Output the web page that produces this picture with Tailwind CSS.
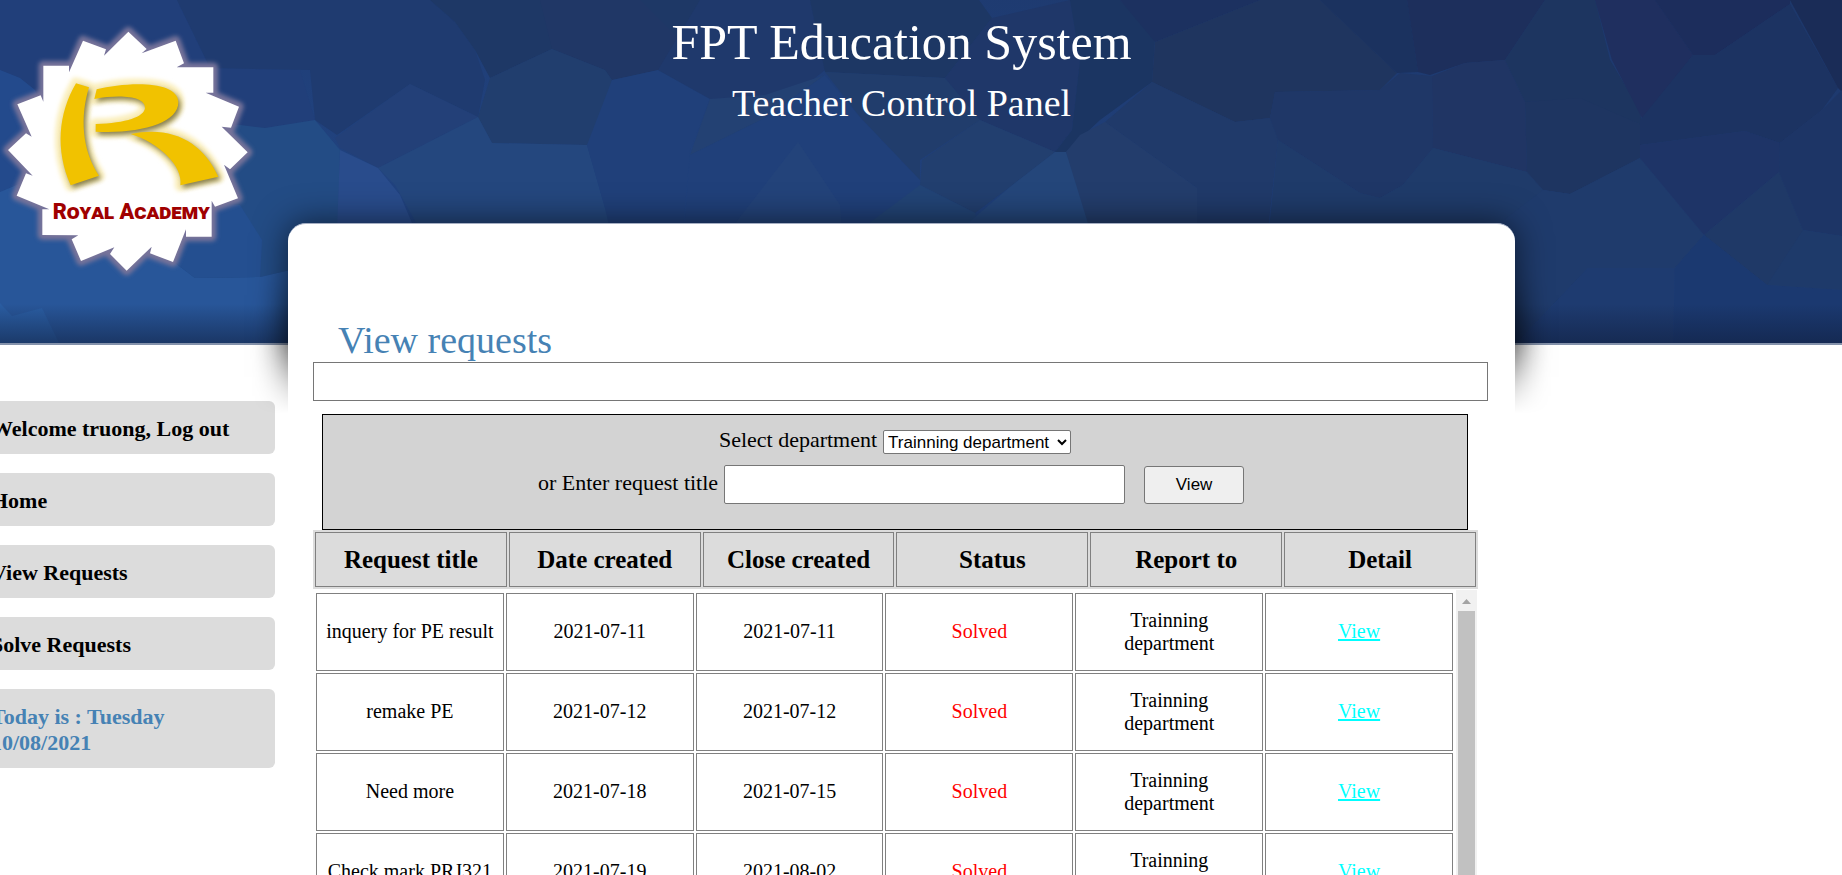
<!DOCTYPE html>
<html lang="en">
<head>
<meta charset="utf-8">
<title>FPT Education System</title>
<script src="https://cdn.jsdelivr.net/npm/@tailwindcss/browser@4"></script>
</head>
<body class="relative h-screen overflow-hidden bg-white font-['Liberation_Serif',serif] text-black">

<!-- Faceted blue banner -->
<svg class="absolute inset-x-0 top-0 h-[345px] w-full" viewBox="0 0 1842 345" preserveAspectRatio="none" aria-hidden="true">
  <defs>
    <linearGradient id="base" x1="0" y1="1" x2="1" y2="0">
      <stop offset="0" stop-color="#285899"/><stop offset=".3" stop-color="#214380"/><stop offset="1" stop-color="#1d376a"/>
    </linearGradient>
    <linearGradient id="foot" x1="0" y1="0" x2="0" y2="1">
      <stop offset="0" stop-color="#0f1c3a" stop-opacity="0"/><stop offset="1" stop-color="#0f1c3a" stop-opacity=".55"/>
    </linearGradient>
  </defs>
  <rect width="1842" height="345" fill="url(#base)"/>
  <path fill="#213f7a" d="M0 0H177L210 68L300 70L315 120L265 128L240 125L120 130L35 90L20 78L0 70Z"/>
  <path fill="#234a8c" d="M0 70L20 78L35 90L60 150L40 175L0 192Z"/>
  <path fill="#285699" d="M0 192L40 175L120 240L165 255L195 278L260 277L290 270L290 345H0Z"/>
  <path fill="#2a5da2" d="M0 303L12 316L42 308L60 345H0Z"/>
  <path fill="#234c85" d="M120 130L240 125L265 128L315 120L340 150L338 223L290 270L260 277L195 278L165 255L100 200Z"/>
  <path fill="#244f90" d="M100 200L240 205L262 240L260 277L195 278L165 255Z"/>
  <path fill="#1f3b70" d="M177 0H430L455 22L475 50L485 80L478 117L410 84L337 135L315 120L310 70L210 68Z"/>
  <path fill="#1e3866" d="M430 0H700L690 75L658 70L612 80L605 70L552 49L490 78L475 50L455 22Z"/>
  <path fill="#203766" d="M540 0H640L700 60L658 70L612 80L605 70L552 49Z"/>
  <path fill="#213e6e" d="M490 78L552 49L605 70L612 80L600 120L587 145L492 143L478 117Z"/>
  <path fill="#234078" d="M410 84L478 117L378 168L340 148L335 138Z"/>
  <path fill="#24477e" d="M478 117L492 143L587 145L605 208L683 218V230H420L395 185L378 168Z"/>
  <path fill="#294c8c" d="M340 150L378 168L400 195L415 230H337Z"/>
  <path fill="#20407a" d="M612 80L658 70L710 99L690 150L683 230H610L605 208L587 145Z"/>
  <path fill="#1f396c" d="M700 0H810L825 70L765 118L710 99L658 70Z"/>
  <path fill="#234173" d="M710 99L765 95L825 75L765 118L690 155Z"/>
  <path fill="#20407a" d="M765 118L825 75L860 117L920 180V186L870 230H684L690 155Z"/>
  <path fill="#23437a" d="M798 142L840 205L842 230H730Z"/>
  <path fill="#1d3764" d="M810 0H979L992 18L945 78L825 72Z"/>
  <path fill="#213d6c" d="M825 72L945 78L980 120L920 160V180L860 117Z"/>
  <path fill="#1f3769" d="M945 78L992 18L1070 0L1080 60L1072 130L1055 152L980 120Z"/>
  <path fill="#223f6f" d="M980 120L1055 152L1010 187L975 213L920 185L922 160Z"/>
  <path fill="#224476" d="M920 185L975 213L980 230H860Z"/>
  <path fill="#24467a" d="M1066 152L1095 230H960L1010 187L1055 152Z"/>
  <path fill="#1b3562" d="M1070 0H1120L1155 38L1152 82L1100 120L1066 152L1055 152L1072 130L1080 60Z"/>
  <path fill="#1c3160" d="M1120 0H1260L1155 42Z"/>
  <path fill="#1f355f" d="M1155 42L1260 0H1320L1397 73L1380 90L1275 92L1270 118L1235 122L1152 82Z"/>
  <path fill="#203a6a" d="M1152 82L1235 122L1270 118L1278 140L1268 230H1197V188L1105 122Z"/>
  <path fill="#233d6c" d="M1105 122L1197 188V230H1090L1066 152L1080 135Z"/>
  <path fill="#1b325f" d="M1320 0H1407L1418 72L1397 73Z"/>
  <path fill="#1d2f5c" d="M1407 0H1545L1505 60L1465 63L1430 75L1418 72Z"/>
  <path fill="#1f3767" d="M1380 90L1400 73L1432 76L1433 148L1403 185L1380 198L1360 193L1278 140L1270 118L1275 92Z"/>
  <path fill="#203564" d="M1432 76L1465 63L1505 60L1525 102L1527 172L1433 148Z"/>
  <path fill="#1f3b6a" d="M1433 148L1527 172L1543 190L1500 240H1268L1278 140L1360 193L1380 198L1403 185Z"/>
  <path fill="#1d3560" d="M1545 0H1595L1610 60L1640 110L1642 125L1580 100L1525 102L1505 60Z"/>
  <path fill="#1e3561" d="M1525 102L1580 98L1642 125L1640 158L1570 194L1543 190L1527 172Z"/>
  <path fill="#1f2f5f" d="M1595 0H1655L1693 55L1643 120L1612 60Z"/>
  <path fill="#1c2d5c" d="M1655 0H1790V4L1715 55H1693Z"/>
  <path fill="#1c3362" d="M1790 4L1715 55L1693 55L1640 120V145L1745 131L1780 143L1822 110L1838 88Z"/>
  <path fill="#1a2c57" d="M1790 0H1842V92L1838 88Z"/>
  <path fill="#1f3b6c" d="M1640 158L1704 235L1675 268H1588L1515 345L1500 223L1543 190L1570 194Z"/>
  <path fill="#1e3b70" d="M1588 268H1675L1673 345H1515Z"/>
  <path fill="#1e3467" d="M1640 145L1745 131L1780 143L1779 172L1704 235L1640 158Z"/>
  <path fill="#1f3967" d="M1779 172L1803 230L1805 285L1767 285L1704 235Z"/>
  <path fill="#1d3566" d="M1822 110L1842 90V236L1803 230L1779 172L1780 143Z"/>
  <path fill="#1b3970" d="M1704 235L1767 285L1842 290V345H1673L1675 268Z"/>
  <path fill="#1e3a6a" d="M1803 230L1842 236V290L1767 285Z"/>
  <rect y="304" width="1842" height="40" fill="url(#foot)"/>
  <rect y="343" width="1842" height="2" fill="#8492ab"/>
</svg>

<div class="relative grid h-full grid-cols-[288px_minmax(0,1fr)_327px]">

  <div>
    <svg class="block h-[290px] w-[260px]" viewBox="0 0 780 870" role="img" aria-label="Royal Academy">
      <defs>
        <filter id="soft" x="-20%" y="-20%" width="140%" height="140%"><feGaussianBlur stdDeviation="6"/></filter>
        <filter id="shade" x="-20%" y="-20%" width="140%" height="140%"><feGaussianBlur stdDeviation="8"/></filter>
        <path id="badge" d="M385 95L440 147L425 160L527 122L552 190L530 202H640V278H617L717 320L693 383L665 380L743 457L690 508L672 494L714 595L645 620L635 602V710H558V688L519 786L450 760L455 740L380 812L330 762L343 742L243 783L215 718L235 706L127 705V628H148L50 587L78 520L98 527L24 450L78 400L95 410L52 313L122 286L130 305V197H207V217L249 122L318 148L312 167Z"/>
        <g id="letter">
          <path d="M228 250L267 262C240 350 245 450 297 527L212 556C165 450 175 340 228 250Z"/>
          <path d="M290 268C380 245 535 240 535 307C535 370 420 402 287 395V372C380 370 432 350 435 325C437 288 360 283 283 297Z"/>
          <path d="M392 402C520 375 610 430 655 530L541 556C550 500 480 430 392 402Z"/>
        </g>
      </defs>
      <use href="#badge" fill="#77739a" stroke="#77739a" stroke-width="28" stroke-linejoin="round" filter="url(#soft)"/>
      <use href="#badge" fill="#fff"/>
      <use href="#letter" fill="#faeebb" stroke="#faeebb" stroke-width="34" stroke-linejoin="round" filter="url(#soft)"/>
      <use href="#letter" fill="#6b6330" opacity=".8" x="7" y="9" filter="url(#shade)"/>
      <use href="#letter" fill="#f1c200"/>
      <text x="158" y="657" fill="#a00000" font-family="Roboto, sans-serif" font-weight="900" font-size="65" style="font-variant:small-caps">Royal Academy</text>
    </svg>

    <nav class="mt-[111px] mr-[13px] -ml-5 flex flex-col gap-[19px] text-[22px]/[26px] font-bold">
      <a href="#" class="rounded-md bg-[#dcdcdc] pt-[15px] pb-3 pl-[11px]">Welcome truong, Log out</a>
      <a href="#" class="rounded-md bg-[#dcdcdc] pt-[15px] pb-3 pl-[11px]">Home</a>
      <a href="#" class="rounded-md bg-[#dcdcdc] pt-[15px] pb-3 pl-[11px]">View Requests</a>
      <a href="#" class="rounded-md bg-[#dcdcdc] pt-[15px] pb-3 pl-[11px]">Solve Requests</a>
      <p class="rounded-md bg-[#dcdcdc] pt-[15px] pb-3 pl-[11px] text-[#4682b4]">Today is : Tuesday<br>10/08/2021</p>
    </nav>
  </div>

  <div class="flex h-full min-h-0 flex-col">
    <header class="h-[223px] pt-[14px] text-center text-white">
      <h1 class="text-[50px]/[56px]">FPT Education System</h1>
      <h2 class="mt-[11px] text-[38px]/[44px]">Teacher Control Panel</h2>
    </header>

    <main class="relative flex min-h-0 flex-1 flex-col rounded-t-[18px]">
      <!-- Card shadow, fading out below the banner -->
      <div class="absolute -inset-x-16 -top-16 h-[260px] overflow-hidden px-16 pt-16 mask-linear-180 mask-linear-from-70% mask-linear-to-98%" aria-hidden="true">
        <div class="relative h-[300px] rounded-t-[18px] shadow-[0_0_34px_rgba(0,0,0,0.6)]">
          <div class="absolute inset-x-2 top-20 h-[68px] shadow-[0_0_36px_8px_rgba(0,0,0,0.55)]"></div>
        </div>
      </div>

      <div class="relative flex min-h-0 flex-1 flex-col rounded-t-[18px] border-t border-[#a5aec2] bg-white pt-[95px] pr-[27px] pl-[25px]">
        <h3 class="pl-[25px] text-[38px]/[43px] text-[#4682b4]">View requests</h3>
        <input type="text" aria-label="Message" class="h-[39px] w-full shrink-0 border border-[#767676] bg-white px-2">

        <form class="mt-[13px] mr-5 ml-[9px] flex flex-col items-center gap-[11px] border border-black bg-[#d3d3d3] pt-[15px] pb-[25px] text-[22px]/[24px]">
          <div class="flex h-6 items-center gap-[6px]">
            <label for="dept" class="pb-1">Select department</label>
            <select id="dept" class="h-6 w-[188px] rounded-[2px] border border-[#767676] bg-white font-['Liberation_Sans',sans-serif] text-[17px]/[20px]">
              <option>Trainning department</option>
            </select>
          </div>
          <div class="flex items-center pr-2">
            <label for="title" class="mr-[6px] pb-1">or Enter request title</label>
            <input id="title" type="text" class="h-[39px] w-[401px] rounded-[2px] border border-[#767676] bg-white px-2">
            <button type="button" class="ml-[19px] h-[38px] w-[100px] rounded-[3px] border border-[#767676] bg-[#efefef] font-['Liberation_Sans',sans-serif] text-[17px]">View</button>
          </div>
        </form>

        <div class="mr-[10px] flex min-h-0 flex-1 flex-col">
          <table class="w-full table-fixed border-separate border-spacing-[2px] bg-[#dcdcdc] text-[25px]/[28px]">
            <tr>
              <th class="h-[55px] border border-[#808080]">Request title</th>
              <th class="border border-[#808080]">Date created</th>
              <th class="border border-[#808080]">Close created</th>
              <th class="border border-[#808080]">Status</th>
              <th class="border border-[#808080]">Report to</th>
              <th class="border border-[#808080]">Detail</th>
            </tr>
          </table>

          <div class="mt-px flex min-h-0 flex-1 overflow-hidden">
            <div class="flex-1 pt-px pr-px pl-px">
              <table class="w-full table-fixed border-separate border-spacing-[2px] text-center text-[20px]/[23px]">
                <tr>
                  <td class="h-[78px] border border-[#808080] px-1 pb-[2px]">inquery for PE result</td>
                  <td class="border border-[#808080] px-1 pb-[2px]">2021-07-11</td>
                  <td class="border border-[#808080] px-1 pb-[2px]">2021-07-11</td>
                  <td class="border border-[#808080] px-1 pb-[2px] text-[#ff0000]">Solved</td>
                  <td class="border border-[#808080] px-1">Trainning<br>department</td>
                  <td class="border border-[#808080] px-1 pb-[2px]"><a href="#" class="text-[#00ffff] underline decoration-2">View</a></td>
                </tr>
                <tr>
                  <td class="h-[78px] border border-[#808080] px-1 pb-[2px]">remake PE</td>
                  <td class="border border-[#808080] px-1 pb-[2px]">2021-07-12</td>
                  <td class="border border-[#808080] px-1 pb-[2px]">2021-07-12</td>
                  <td class="border border-[#808080] px-1 pb-[2px] text-[#ff0000]">Solved</td>
                  <td class="border border-[#808080] px-1">Trainning<br>department</td>
                  <td class="border border-[#808080] px-1 pb-[2px]"><a href="#" class="text-[#00ffff] underline decoration-2">View</a></td>
                </tr>
                <tr>
                  <td class="h-[78px] border border-[#808080] px-1 pb-[2px]">Need more</td>
                  <td class="border border-[#808080] px-1 pb-[2px]">2021-07-18</td>
                  <td class="border border-[#808080] px-1 pb-[2px]">2021-07-15</td>
                  <td class="border border-[#808080] px-1 pb-[2px] text-[#ff0000]">Solved</td>
                  <td class="border border-[#808080] px-1">Trainning<br>department</td>
                  <td class="border border-[#808080] px-1 pb-[2px]"><a href="#" class="text-[#00ffff] underline decoration-2">View</a></td>
                </tr>
                <tr>
                  <td class="h-[78px] border border-[#808080] px-1 pb-[2px]">Check mark PRJ321</td>
                  <td class="border border-[#808080] px-1 pb-[2px]">2021-07-19</td>
                  <td class="border border-[#808080] px-1 pb-[2px]">2021-08-02</td>
                  <td class="border border-[#808080] px-1 pb-[2px] text-[#ff0000]">Solved</td>
                  <td class="border border-[#808080] px-1">Trainning<br>department</td>
                  <td class="border border-[#808080] px-1 pb-[2px]"><a href="#" class="text-[#00ffff] underline decoration-2">View</a></td>
                </tr>
              </table>
            </div>
            <!-- Scroll bar of the request list -->
            <div class="mr-px flex w-[21px] flex-col items-center bg-[#f1f1f1]" aria-hidden="true">
              <svg class="h-[21px] w-[21px] shrink-0" viewBox="0 0 21 21"><path fill="#a3a3a3" d="M6 14L10.500 9L15 14Z"/></svg>
              <div class="w-[17px] flex-1 bg-[#c1c1c1]"></div>
            </div>
          </div>
        </div>
      </div>
    </main>
  </div>
</div>
</body>
</html>
